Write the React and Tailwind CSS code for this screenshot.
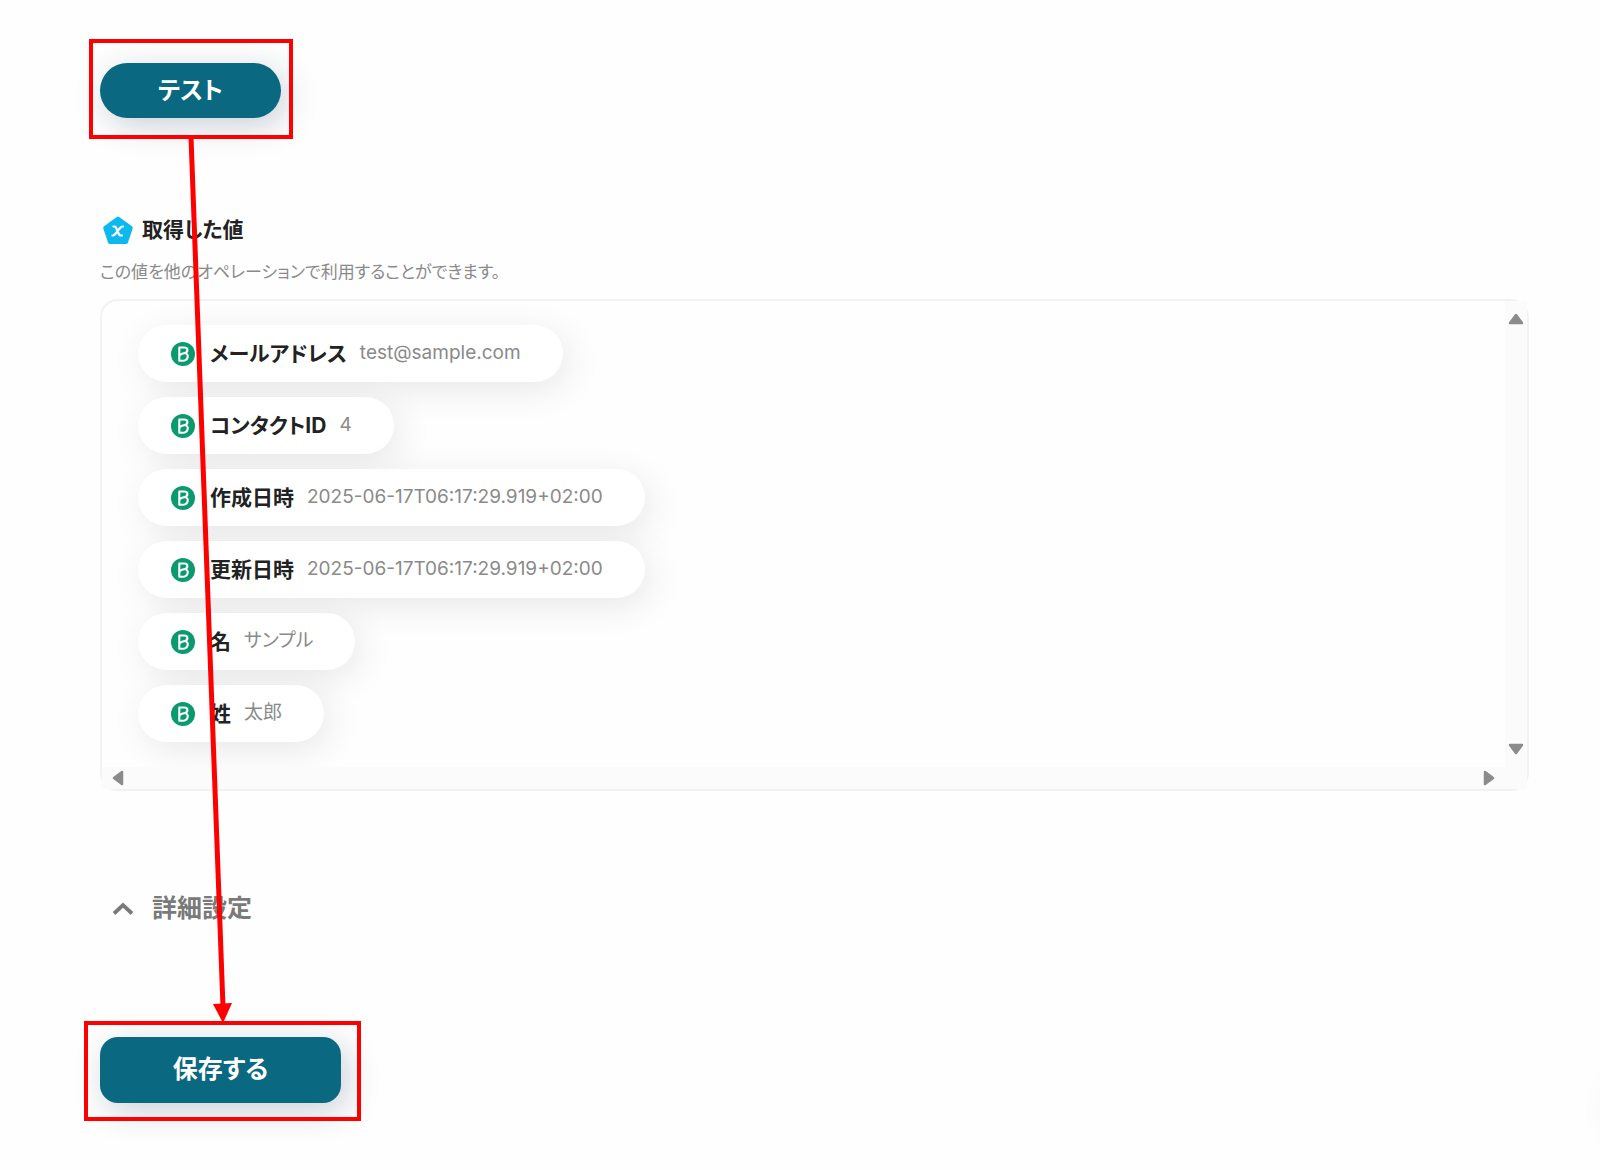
const VALUES = [
  { label: "メールアドレス", value: "test@sample.com" },
  { label: "コンタクトID", value: "4" },
  { label: "作成日時", value: "2025-06-17T06:17:29.919+02:00" },
  { label: "更新日時", value: "2025-06-17T06:17:29.919+02:00" },
  { label: "名", value: "サンプル" },
  { label: "姓", value: "太郎" },
];

function VariableIcon() {
  return (
    <svg className="h-9 w-9" viewBox="0 0 36 36" aria-hidden="true">
      <path
        d="M18 6.500 L30.800 15.800 L26 30 L10 30 L5.200 15.800 Z"
        fill="#0db9ec"
        stroke="#0db9ec"
        strokeWidth="4"
        strokeLinejoin="round"
      />
      <path
        d="M13.500 14.500 H14.500 C15.500 14.500 15.800 15 16.200 16 L18.800 22 C19.200 23 19.700 23.500 20.700 23.500 H22 M23 14.500 H22.500 C21.500 14.500 21 15 20.300 15.800 L15 22.200 C14.300 23 13.800 23.500 12.500 23.500"
        fill="none"
        stroke="#fff"
        strokeWidth="2.200"
        strokeLinecap="round"
      />
    </svg>
  );
}

function ServiceIcon() {
  return (
    <svg className="h-6 w-6" viewBox="0 0 24 24" aria-hidden="true">
      <circle cx="12" cy="12" r="12" fill="#0b996e" />
      <path
        d="M8.300 5.500 H13.200 C17.200 5.500 17.500 10 13.800 11 C18.700 11.800 17.200 18.800 11.500 18.800 H8.300 Z M8.300 14.500 C8.500 12 11.500 11.700 13.800 11"
        fill="none"
        stroke="#fff"
        strokeWidth="2.100"
        strokeLinejoin="round"
      />
    </svg>
  );
}

function Arrow({ className }) {
  return (
    <svg className={className} viewBox="0 0 16 12" aria-hidden="true">
      <path d="M8 2 L14 10 H2 Z" fill="#8b8b8b" stroke="#8b8b8b" strokeWidth="2.500" strokeLinejoin="round" />
    </svg>
  );
}

export default function App() {
  return (
    <div className="relative min-h-screen overflow-hidden bg-[#fefefe] pt-[63px] pr-[71px] pb-[67px] pl-[100px] font-['Inter','Noto_Sans_CJK_JP',sans-serif] text-[#222] [font-feature-settings:'palt']">
      <main className="flex flex-col items-start">
        <div className="relative">
          <button className="h-[55px] w-[181px] rounded-full bg-[#0a6880] text-2xl font-bold text-white shadow-[6px_8px_32px_rgba(20,50,80,0.22)]">
            テスト
          </button>
          <div className="pointer-events-none absolute -top-6 -right-3 -bottom-[21px] -left-[11px] border-4 border-[#fe0000]" />
        </div>

        <section className="mt-[94px] self-stretch">
          <h2 className="flex h-9 items-center gap-1.5 text-[21px] font-bold">
            <VariableIcon />
            取得した値
          </h2>
          <p className="mt-2 text-[17px] leading-8 text-[#8a8a8a]">この値を他のオペレーションで利用することができます。</p>

          <div className="relative mt-[11px] grid grid-cols-[1fr_22px] grid-rows-[1fr_22px] rounded-[18px] border-2 border-[#f2f2f2] bg-[#fefefe]">
            <ul className="flex flex-col items-start gap-[15px] overflow-hidden rounded-tl-2xl pt-6 pb-[25px] pl-9">
              {VALUES.map(({ label, value }) => (
                <li
                  key={label}
                  className="flex h-[57px] items-center rounded-full bg-white pr-[42px] pl-[33px] shadow-[6px_8px_36px_rgba(0,0,0,0.09)]"
                >
                  <ServiceIcon />
                  <span className="ml-[15px] text-[21px] font-bold">{label}</span>
                  <span className="ml-[13px] text-[19px] text-[#8a8a8a]">{value}</span>
                </li>
              ))}
            </ul>
            <div className="flex flex-col items-center justify-between bg-[#fbfbfb] py-3">
              <Arrow className="h-3 w-4" />
              <Arrow className="h-3 w-4 rotate-180" />
            </div>
            <div className="flex items-center justify-between bg-[#fbfbfb] px-2">
              <Arrow className="h-3 w-4 -rotate-90" />
              <Arrow className="h-3 w-4 rotate-90" />
            </div>
            <div className="bg-[#fbfbfb]" />
          </div>
        </section>

        <button className="mt-[100px] flex h-9 items-center gap-[18px] pl-3 text-[25px] font-bold text-[#7a7a7a]">
          <svg className="h-5 w-[22px]" viewBox="0 0 22 20" aria-hidden="true">
            <path d="M2 14.500 L11 6 L20 14.500" fill="none" stroke="#7a7a7a" strokeWidth="3.800" />
          </svg>
          詳細設定
        </button>

        <div className="relative mt-[110px]">
          <button className="h-[66px] w-[241px] rounded-[18px] bg-[#0a6880] text-[25px] font-bold text-white shadow-[6px_8px_32px_rgba(20,50,80,0.22)]">
            保存する
          </button>
          <div className="pointer-events-none absolute -top-4 -right-5 -bottom-[18px] -left-4 border-4 border-[#fe0000]" />
        </div>
      </main>

      <svg
        className="pointer-events-none absolute top-[137px] left-[180px] h-[886px] w-[60px]"
        viewBox="0 0 60 886"
        aria-hidden="true"
      >
        <path d="M11 0 L43 870" stroke="#fe0000" strokeWidth="5" />
        <path d="M33 867 L52 866 L43 886 Z" fill="#fe0000" />
      </svg>

      <div className="pointer-events-none absolute -right-20 bottom-5 h-20 w-20 rounded-full shadow-[0_0_28px_rgba(0,0,0,0.03)]" />
    </div>
  );
}
